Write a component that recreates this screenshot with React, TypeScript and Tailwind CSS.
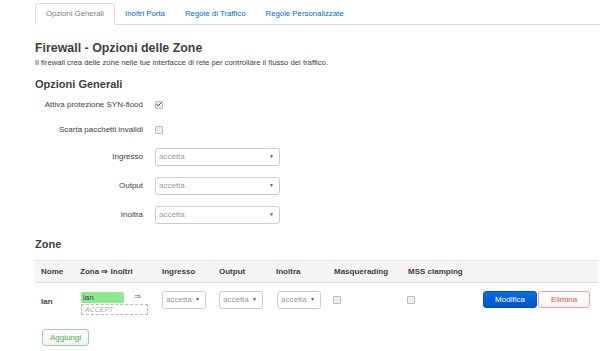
import { Check } from "lucide-react";

const tabs = ["Opzioni Generali", "Inoltri Porta", "Regole di Traffico", "Regole Personalizzate"];

const Select = ({ w }: { w: string }) => (
  <div className={`${w} h-[18px] flex items-center justify-between px-[3px] border border-[#ccc] rounded-[3px] bg-white`}>
    <span className="text-[8px] text-[#999]">accetta</span>
    <span className="text-[5px] text-[#555] pr-[2px]">▼</span>
  </div>
);

const Box = ({ checked }: { checked?: boolean }) => (
  <div className="w-[8px] h-[8px] border border-[#bbb] rounded-[1px] bg-[#eee] flex items-center justify-center">
    {checked && <Check size={7} strokeWidth={4} className="text-[#333]" />}
  </div>
);

const App = () => {
  return (
    <div className="w-[600px] h-[351px] bg-white overflow-hidden font-['Liberation_Sans',Arial,sans-serif] text-[#404040]">
      <div className="flex ml-[35px] mt-[3px] border-b border-[#ddd] h-[22px]">
        {tabs.map((t, i) => (
          <div
            key={t}
            className={
              i === 0
                ? "px-[10px] h-[22px] flex items-center text-[7.8px] text-[#808080] border border-[#ddd] border-b-white rounded-t-[3px] bg-white -mb-px"
                : "px-[10px] h-[22px] flex items-center text-[7.8px] text-[#0069d6]"
            }
          >
            {t}
          </div>
        ))}
      </div>

      <div className="pl-[35px]">
        <h1 className="text-[12.4px] font-bold mt-[14px] leading-[18px]">Firewall - Opzioni delle Zone</h1>
        <p className="text-[7.7px] leading-[10px] mt-[1px]">
          Il firewall crea delle zone nelle tue interfacce di rete per controllare il flusso del traffico.
        </p>
        <h2 className="text-[11px] font-bold mt-[9px] leading-[14px]">Opzioni Generali</h2>

        <div className="flex flex-col mt-[5px]">
          <div className="flex items-center h-[17px]">
            <span className="w-[108px] text-right text-[8px]">Attiva protezione SYN-flood</span>
            <div className="ml-[12px]"><Box checked /></div>
          </div>
          <div className="flex items-center h-[17px] mt-[8px]">
            <span className="w-[108px] text-right text-[8px]">Scarta pacchetti invalidi</span>
            <div className="ml-[12px]"><Box /></div>
          </div>
          {["Ingresso", "Output", "Inoltra"].map((l) => (
            <div key={l} className="flex items-center h-[18px] mt-[11px] first:mt-0 [&:nth-child(3)]:mt-[10px]">
              <span className="w-[108px] text-right text-[8px]">{l}</span>
              <div className="ml-[12px]"><Select w="w-[125px]" /></div>
            </div>
          ))}
        </div>

        <h2 className="text-[11px] font-bold mt-[13px] leading-[14px]">Zone</h2>

        <div className="mt-[9px] w-[563px]">
          <div className="flex items-center h-[23px] bg-[#f5f5f5] border-t border-[#e5e5e5] border-b border-b-[#ddd] text-[8px] font-bold">
            <span className="w-[45px] pl-[6px]">Nome</span>
            <span className="w-[82px]">Zona ⇒ Inoltri</span>
            <span className="w-[57px]">Ingresso</span>
            <span className="w-[57px]">Output</span>
            <span className="w-[58px]">Inoltra</span>
            <span className="w-[74px]">Masquerading</span>
            <span>MSS clamping</span>
          </div>
          <div className="flex items-start h-[37px] pt-[8px] text-[8px]">
            <span className="w-[46px] pl-[6px] font-bold mt-[5px]">lan</span>
            <div className="w-[81px] flex flex-col">
              <div className="flex items-center">
                <div className="w-[43px] h-[11px] bg-[#8ee88e] rounded-[2px] pl-[2px] text-[8px] leading-[11px]">lan</div>
                <span className="ml-[10px] text-[8px] text-[#666]">⇒</span>
              </div>
              <div className="w-[67px] h-[11px] mt-[1px] border border-dashed border-[#bbb] pl-[3px] text-[7px] italic text-[#aaa] leading-[9px]">
                ACCEPT
              </div>
            </div>
            <Select w="w-[44px]" />
            <div className="ml-[13px]"><Select w="w-[44px]" /></div>
            <div className="ml-[14px]"><Select w="w-[44px]" /></div>
            <div className="ml-[12px] mt-[5px]"><Box /></div>
            <div className="ml-[66px] mt-[5px]"><Box /></div>
            <div className="ml-[68px] flex gap-px">
              <div className="w-[54px] h-[17px] rounded-[3px] bg-gradient-to-b from-[#0a6fe0] to-[#0053c8] border border-[#0050b8] text-white text-[8px] flex items-center justify-center">
                Modifica
              </div>
              <div className="w-[52px] h-[17px] rounded-[3px] bg-gradient-to-b from-white to-[#f3f3f3] border border-[#e8a0a0] text-[#d9534f] text-[8px] flex items-center justify-center">
                Elimina
              </div>
            </div>
          </div>
          <div className="ml-[7px] mt-[9px] w-[47px] h-[17px] rounded-[3px] border border-[#9cd69c] bg-gradient-to-b from-white to-[#f2f2f2] text-[#4cae4c] text-[8px] flex items-center justify-center">
            Aggiungi
          </div>
        </div>
      </div>
    </div>
  );
};

export default App;
